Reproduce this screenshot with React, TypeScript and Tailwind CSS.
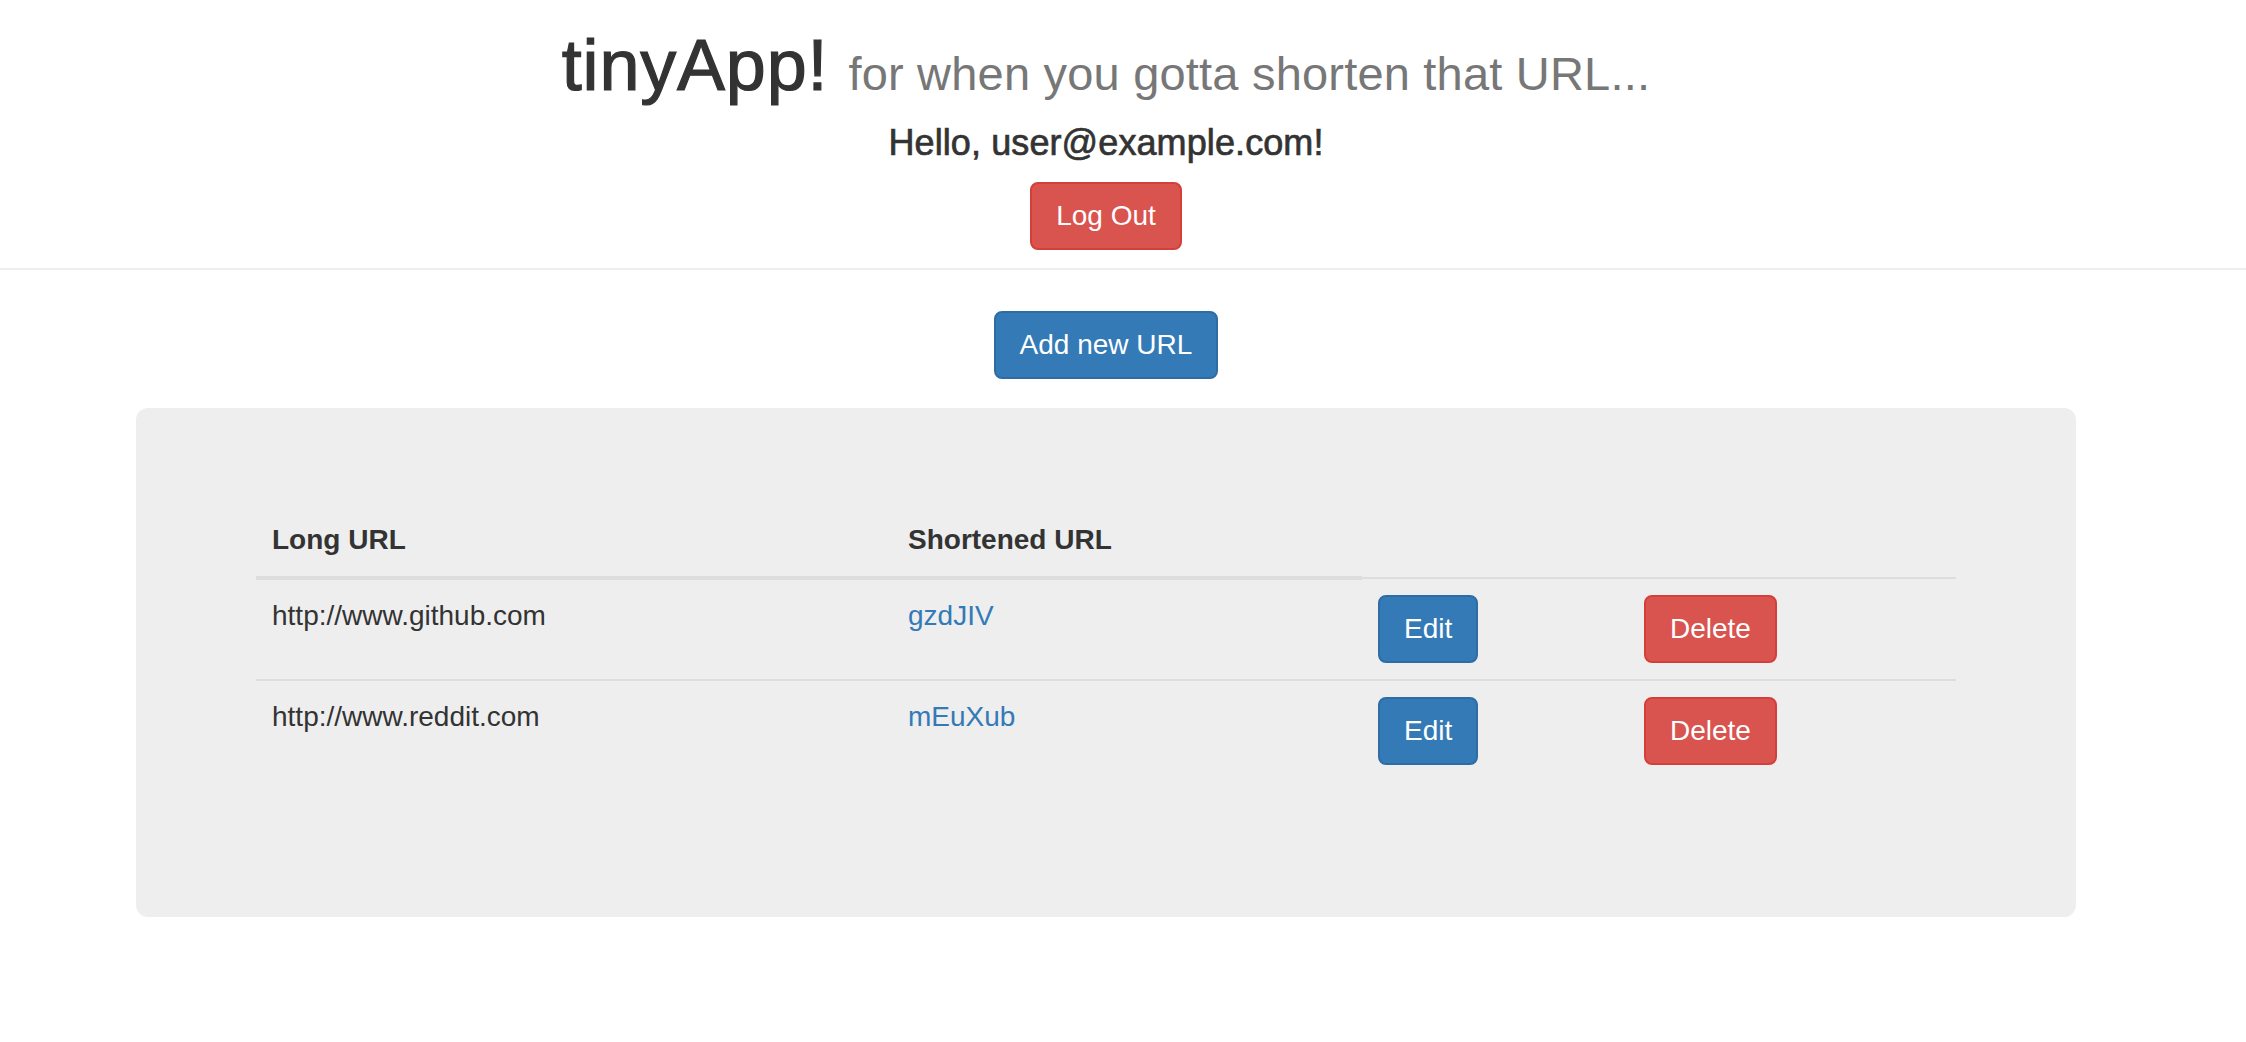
import React from "react";

const btnBase =
  "inline-block px-[24px] py-[12px] text-[28px] leading-[40px] border-2 rounded-[8px] text-white font-normal whitespace-nowrap";
const btnPrimary = "bg-[#337ab7] border-[#2e6da4]";
const btnDanger = "bg-[#d9534f] border-[#d43f3a]";

const rows = [
  { long: "http://www.github.com", short: "gzdJIV" },
  { long: "http://www.reddit.com", short: "mEuXub" },
];

export default function App() {
  return (
    <div className="min-h-screen bg-white text-[#333] font-['Liberation_Sans',Arial,Helvetica,sans-serif]">
      <header className="w-[2212px] flex flex-col items-center">
        <h1 className="mt-[26px] text-[72px] leading-[79px] font-medium whitespace-nowrap">
          <span className="tracking-[0.8px] [-webkit-text-stroke:1.2px_#333]">tinyApp!</span>{" "}
          <small className="text-[47px] leading-none font-normal text-[#777] tracking-[0.2px]">
            for when you gotta shorten that URL...
          </small>
        </h1>
        <h4 className="mt-[18px] text-[36px] leading-[40px] font-medium tracking-[0.1px] [-webkit-text-stroke:0.7px_#333]">
          Hello, user@example.com!
        </h4>
        <button className={`mt-[19px] ${btnBase} ${btnDanger}`}>Log Out</button>
      </header>
      <div className="mt-[18px] h-[2px] w-full bg-[#eee]" />
      <main className="w-[2212px] flex flex-col items-center">
        <button className={`mt-[41px] ${btnBase} ${btnPrimary}`}>Add new URL</button>
        <div className="mt-[29px] w-[1940px] bg-[#eee] rounded-[12px] px-[120px] pt-[96px] pb-[136px]">
          <table className="w-full table-fixed border-collapse">
            <colgroup>
              <col className="w-[636px]" />
              <col className="w-[470px]" />
              <col className="w-[266px]" />
              <col className="w-[328px]" />
            </colgroup>
            <thead>
              <tr>
                <th className="p-[16px] text-left font-bold text-[28px] leading-[40px] border-b-4 border-[#ddd]">
                  Long URL
                </th>
                <th className="p-[16px] text-left font-bold text-[28px] leading-[40px] border-b-4 border-[#ddd]">
                  Shortened URL
                </th>
              </tr>
            </thead>
            <tbody>
              {rows.map((r) => (
                <tr key={r.short}>
                  <td className="p-[16px] align-top text-[28px] leading-[40px] border-t-2 border-[#ddd]">
                    {r.long}
                  </td>
                  <td className="p-[16px] align-top text-[28px] leading-[40px] border-t-2 border-[#ddd]">
                    <a className="text-[#337ab7]" href="#">
                      {r.short}
                    </a>
                  </td>
                  <td className="p-[16px] align-top border-t-2 border-[#ddd]">
                    <button className={`${btnBase} ${btnPrimary}`}>Edit</button>
                  </td>
                  <td className="p-[16px] align-top border-t-2 border-[#ddd]">
                    <button className={`${btnBase} ${btnDanger}`}>Delete</button>
                  </td>
                </tr>
              ))}
            </tbody>
          </table>
        </div>
      </main>
    </div>
  );
}
